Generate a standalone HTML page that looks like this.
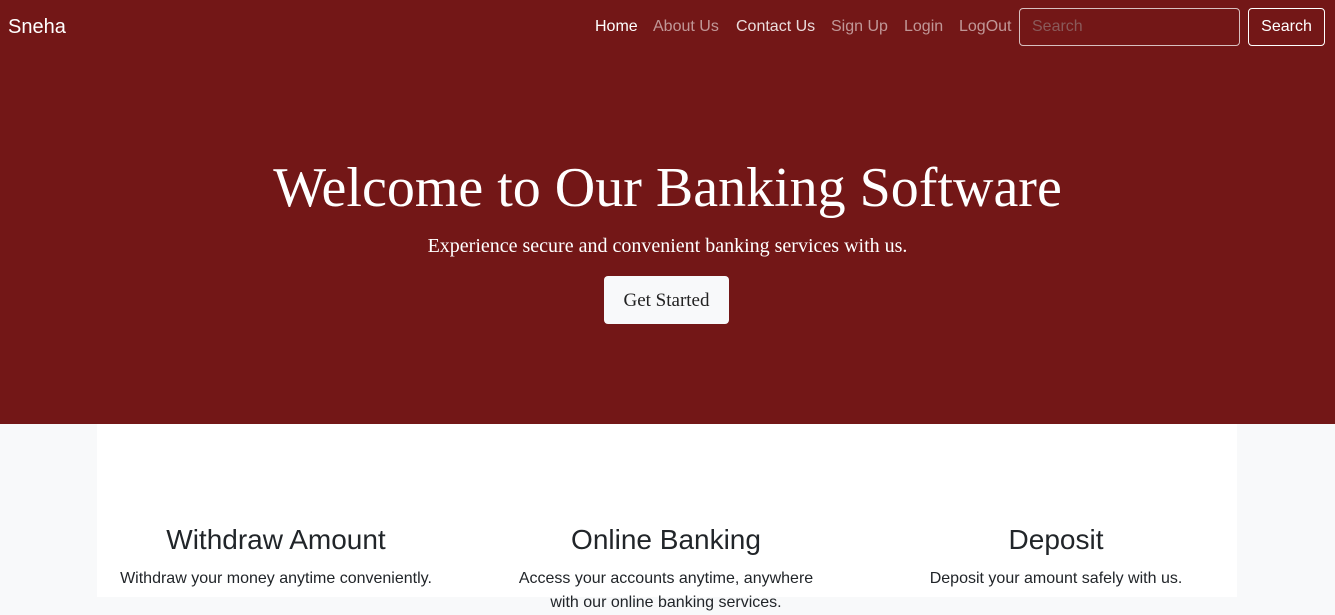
<!DOCTYPE html>
<html><head><style>
*{margin:0;padding:0;box-sizing:border-box}
body{width:1335px;height:597px;overflow:hidden;background:#f8f9fa;font-family:"Liberation Sans",Arial,sans-serif;position:relative}
.hero{position:absolute;left:0;top:0;width:1335px;height:424px;background:#731717}
.brand{position:absolute;left:8px;top:16px;color:#fff;font-size:20px}
.nav{position:absolute;top:18px;font-size:16px;color:rgba(255,255,255,.55)}
.w{color:#fff}
.search{position:absolute;left:1019px;top:8px;width:221px;height:38px;border:1px solid #d8c0c0;border-radius:4px;color:#8a5a5a;font-size:16px;padding:9px 12px}
.sbtn{position:absolute;left:1248px;top:8px;width:77px;height:38px;border:1px solid #fff;border-radius:4px;color:#fff;font-size:16px;text-align:center;line-height:36px}
h1{position:absolute;left:0;width:1335px;top:156px;text-align:center;font-family:"Liberation Serif",serif;font-weight:normal;font-size:56px;color:#fff}
.sub{position:absolute;left:0;width:1335px;top:235px;text-align:center;font-family:"Liberation Serif",serif;font-size:20px;color:#fff}
.btn{position:absolute;left:604px;top:276px;width:125px;height:48px;background:#f8f9fa;border-radius:4px;font-family:"Liberation Serif",serif;font-size:19px;color:#222;text-align:center;line-height:50px}
.cont{position:absolute;left:97px;top:424px;width:1140px;height:173px;background:#fff}
.col{position:absolute;top:523px;width:390px;text-align:center;color:#212529}
.col h2{font-weight:normal;font-size:28px;line-height:34px}
.col p{font-size:16px;line-height:24px;margin-top:10px;padding:0 10px}
</style></head><body>
<div class="hero"></div>
<div class="brand">Sneha</div>
<div class="nav w" style="left:595px">Home</div>
<div class="nav" style="left:653px">About Us</div>
<div class="nav w" style="left:736px;color:rgba(255,255,255,.85)">Contact Us</div>
<div class="nav" style="left:831px">Sign Up</div>
<div class="nav" style="left:904px">Login</div>
<div class="nav" style="left:959px">LogOut</div>
<div class="search">Search</div>
<div class="sbtn">Search</div>
<h1>Welcome to Our Banking Software</h1>
<div class="sub">Experience secure and convenient banking services with us.</div>
<div class="btn">Get Started</div>
<div class="cont"></div>
<div class="col" style="left:81px"><h2>Withdraw Amount</h2><p>Withdraw your money anytime conveniently.</p></div>
<div class="col" style="left:471px"><h2>Online Banking</h2><p style="padding:0 35px">Access your accounts anytime, anywhere with our online banking services.</p></div>
<div class="col" style="left:861px"><h2>Deposit</h2><p>Deposit your amount safely with us.</p></div>
</body></html>
